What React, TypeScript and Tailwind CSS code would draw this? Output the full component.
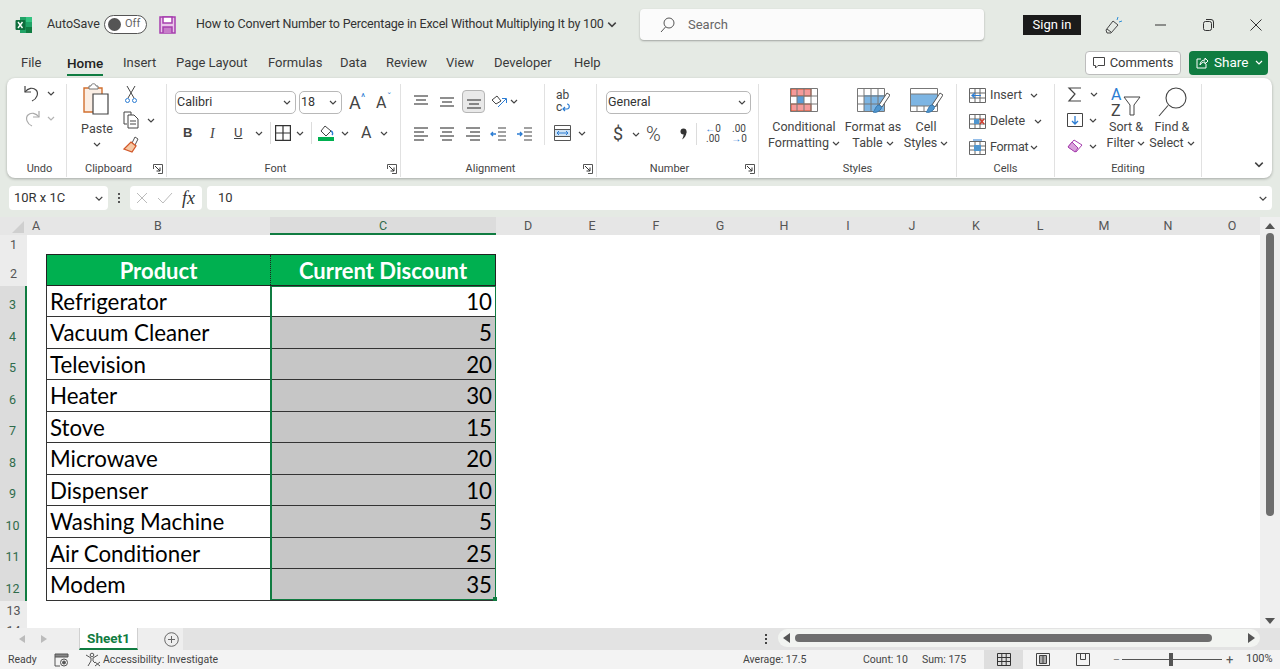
import React from "react";

const Chev = ({ c = "", s = "#444" }: { c?: string; s?: string }) => (
  <svg viewBox="0 0 8 5" className={`w-[8px] h-[5px] shrink-0 ${c}`} fill="none" stroke={s} strokeWidth="1.2"><path d="M1 1l3 3 3-3" /></svg>
);
const I = ({ w, h, children, c = "" }: { w: number; h: number; children: React.ReactNode; c?: string }) => (
  <svg width={w} height={h} viewBox={`0 0 ${w} ${h}`} fill="none" stroke="#444" strokeWidth="1" className={`shrink-0 ${c}`}>{children}</svg>
);
const Lines = ({ rows }: { rows: [number, number, number][] }) => (
  <I w={18} h={16}>{rows.map(([x1, x2, y], i) => <path key={i} d={`M${x1} ${y}H${x2}`} strokeWidth="1.2" />)}</I>
);
const Launcher = () => (
  <svg width="10" height="10" viewBox="0 0 10 10" fill="none" stroke="#555" className="absolute right-[3px] top-[3px]">
    <path d="M.5 5V.5H9.5V9.5H5" /><path d="M2 2l5 5M7 3.5V7H3.5" stroke="#333" />
  </svg>
);
const Group = ({ w, label, launcher, pad = "", children }: { w: string; label: string; launcher?: boolean; pad?: string; children: React.ReactNode }) => (
  <div className={`${w} h-full flex flex-col shrink-0`}>
    <div className="flex-1 min-h-0 border-r border-[#e1e1e1] mt-[6px] -mb-[3px] relative">{children}</div>
    <div className={`h-[16px] mb-[1px] relative text-[11px] leading-[16px] text-center text-[#444] border-r border-[#e1e1e1] ${launcher ? "pr-[16px]" : ""} ${pad}`}>
      {label}{launcher && <Launcher />}
    </div>
  </div>
);
const Select = ({ w, text }: { w: string; text: string }) => (
  <div className={`${w} h-[23px] shrink-0 bg-white border border-[#b8b8b8] rounded-[5px] flex items-center justify-between pl-[1px] pr-[4px] text-[12.5px] text-[#333]`}>
    <span>{text}</span><Chev />
  </div>
);
const GridIcon = ({ children }: { children: React.ReactNode }) => (
  <I w={30} h={26}>
    {children}
    <path d="M1.5 1.5h27v23h-27z M1.5 9h27M1.5 17h27M8 1.5v23M15 1.5v23M22 1.5v23" stroke="#777" />
  </I>
);
const BigBtn = ({ w, icon, l1, l2 }: { w: string; icon: React.ReactNode; l1: string; l2: string }) => (
  <div className={`${w} flex flex-col items-center text-[12.5px] leading-[16px] text-[#444] shrink-0`}>
    <div className="h-[36px] pt-[4px] flex items-start justify-center">{icon}</div>
    <div>{l1}</div>
    <div className="flex items-center gap-[3px] whitespace-nowrap">{l2}<Chev /></div>
  </div>
);
const Brush = () => (
  <g>
    <path d="M31 6l3 2-8 12-3-2z" fill="#fff" stroke="#555" />
    <path d="M22 18c3 0 4 2 3 4-2 3-6 4-8 3 2-1 2-5 5-7z" fill="#4f96cf" stroke="#3a78ad" />
  </g>
);

const Cols = ["D", "E", "F", "G", "H", "I", "J", "K", "L", "M", "N", "O"];
const rowsData: [string, string][] = [
  ["Refrigerator", "10"], ["Vacuum Cleaner", "5"], ["Television", "20"], ["Heater", "30"], ["Stove", "15"],
  ["Microwave", "20"], ["Dispenser", "10"], ["Washing Machine", "5"], ["Air Conditioner", "25"], ["Modem", "35"],
];
const rowH = ["h-[19px]", "h-[32px]", "h-[31px]", "h-[32px]", "h-[31px]", "h-[32px]", "h-[31px]", "h-[32px]", "h-[31px]", "h-[32px]", "h-[31px]", "h-[32px]", "h-[21px]", "h-[8px]"];
const calibri = "font-['Lato',sans-serif]";

export default function App() {
  return (
    <div className="w-[1280px] h-[669px] overflow-hidden bg-[#e5eae4] font-['Roboto',sans-serif] text-[#333] flex flex-col">
      {/* Title bar */}
      <div className="h-[48px] pt-[1px] flex items-center shrink-0">
        <svg width="18" height="18" viewBox="0 0 18 18" className="ml-[15px]" stroke="none">
          <path d="M5 1h12v16H5z" fill="#21a366" /><path d="M11 1h6v5h-6z" fill="#33c481" /><path d="M11 11h6v6h-6z" fill="#107c41" />
          <rect x="0.5" y="4" width="10" height="10" rx="1" fill="#0f6e3c" />
          <path d="M3 6l4.5 6M7.5 6L3 12" stroke="#fff" strokeWidth="1.4" />
        </svg>
        <span className="ml-[14px] w-[52px] text-[12.5px] text-[#333]">AutoSave</span>
        <div className="ml-[5px] w-[43px] h-[19px] rounded-full border border-[#555] bg-white flex items-center pl-[3px] gap-[4px]">
          <div className="w-[13px] h-[13px] rounded-full bg-[#555]" />
          <span className="text-[11px] text-[#666]">Off</span>
        </div>
        <svg width="17" height="18" viewBox="0 0 17 18" className="ml-[12px]" fill="none" stroke="#a63fae" strokeWidth="1.5">
          <path d="M1 1h15v16H1z" fill="#e9c6e9" /><path d="M4 1h9v6H4z" fill="#fff" /><path d="M4 17v-6h9v6" fill="#c77cc9" />
        </svg>
        <span className="ml-[20px] text-[12.5px] tracking-[-0.18px] text-[#333] whitespace-nowrap w-[412px]">How to Convert Number to Percentage in Excel Without Multiplying It by 100</span>
        <Chev c="scale-125" />
        <div className="ml-[24px] w-[344px] h-[31px] bg-[#fbfbfb] rounded-[4px] shadow-[0_1px_2px_rgba(0,0,0,0.3)] flex items-center pl-[20px]">
          <svg width="15" height="16" viewBox="0 0 15 16" fill="none" stroke="#555"><circle cx="9" cy="6" r="5" /><path d="M5.5 10L1 15" /></svg>
          <span className="ml-[13px] text-[13px] text-[#666]">Search</span>
        </div>
        <div className="ml-[39px] w-[58px] h-[20px] bg-[#1b1b1b] text-white text-[13px] leading-[20px] text-center">Sign in</div>
        <svg width="18" height="20" viewBox="0 0 18 20" className="ml-[23px]" fill="none" stroke="#444">
          <path d="M9 6l5 4-7 8H3l-1-3z" /><path d="M3 14l4 3" />
          <path d="M13 5l1-3M15 7l3-1" stroke="#2b8dd6" />
        </svg>
        <svg width="12" height="2" viewBox="0 0 12 2" className="ml-[33px]" stroke="#333"><path d="M0 1h11" /></svg>
        <svg width="11" height="12" viewBox="0 0 11 12" className="ml-[36px]" fill="none" stroke="#333"><rect x=".5" y="2.5" width="8" height="9" rx="2" /><path d="M3 .5h5a2.500 2.500 0 012.500 2.500v6" /></svg>
        <svg width="12" height="12" viewBox="0 0 12 12" className="ml-[36px]" stroke="#333"><path d="M.5.5l11 11M11.500.5l-11 11" /></svg>
      </div>

      {/* Tabs */}
      <div className="h-[30px] pl-[21px] flex items-center shrink-0 text-[13px] text-[#3a3a3a] relative">
        <span className="w-[46px]">File</span>
        <span className="w-[56px]"><span className="font-medium relative text-[#222] inline-block text-[13.5px]">Home<span className="absolute left-0 right-0 -bottom-[3px] h-[2px] bg-[#107c41]" /></span></span>
        <span className="w-[53px]">Insert</span>
        <span className="w-[92px]">Page Layout</span>
        <span className="w-[72px]">Formulas</span>
        <span className="w-[46px]">Data</span>
        <span className="w-[60px]">Review</span>
        <span className="w-[48px]">View</span>
        <span className="w-[80px]">Developer</span>
        <span>Help</span>
        <div className="ml-auto flex items-center gap-[8px] mr-[12px] -mt-[1px]">
          <div className="w-[96px] h-[24px] bg-white border border-[#bdbdbd] rounded-[4px] flex items-center justify-center gap-[5px] text-[13px]">
            <svg width="12" height="12" viewBox="0 0 12 12" fill="none" stroke="#444"><path d="M.5.5h11v8H5L2.500 11V8.500h-2z" /></svg>
            Comments
          </div>
          <div className="w-[79px] h-[24px] bg-[#107c41] text-white rounded-[4px] flex items-center pl-[7px] gap-[5px] text-[13.5px]">
            <svg width="13" height="13" viewBox="0 0 13 13" fill="none" stroke="#fff"><path d="M5 3H1v9h9V8" /><path d="M4 9c0-3 2-5 5-5V2l3 3-3 3V6c-2 0-4 1-5 3z" /></svg>
            Share
            <Chev c="ml-[2px]" s="#fff" />
          </div>
        </div>
      </div>

      {/* Ribbon */}
      <div className="mx-[7px] w-[1265px] h-[100px] bg-white rounded-[8px] shadow-[0_1px_3px_rgba(0,0,0,0.28)] flex shrink-0 text-[#444] relative">
        <Group w="w-[60px]" label="Undo" pad="pl-[6px]">
          <div className="pl-[16px] pt-[1px] flex flex-col gap-[9px]">
            <div className="flex items-center gap-[6px] h-[16px]">
              <svg width="18" height="17" viewBox="0 0 18 17" fill="none" stroke="#444" strokeWidth="1.2"><path d="M2 1v6h6" /><path d="M2 7c3-4 8-5 11-2s1 9-4 11" /></svg>
              <Chev />
            </div>
            <div className="flex items-center gap-[6px] h-[16px]">
              <svg width="18" height="17" viewBox="0 0 18 17" fill="none" stroke="#aaa" strokeWidth="1.2"><path d="M16 1v6h-6" /><path d="M16 7c-3-4-8-5-11-2s-1 9 4 11" /></svg>
              <Chev c="opacity-40" />
            </div>
          </div>
        </Group>
        <Group w="w-[100px]" label="Clipboard" launcher>
          <div className="flex pl-[15px] -mt-[1px]">
            <div className="w-[30px] flex flex-col items-center text-[12.5px] leading-[16px]">
              <svg width="30" height="32" viewBox="0 0 30 32" fill="none">
                <path d="M2 5h18v24H2z" fill="#fbeee4" stroke="#d2702f" strokeWidth="1.4" />
                <path d="M7 6V3h2c0-3 5-3 5 0h2v3z" fill="#fff" stroke="#777" />
                <path d="M11 11h15v20H11z" fill="#fff" stroke="#444" strokeWidth="1.2" />
              </svg>
              <div className="mt-[6px]">Paste</div>
              <Chev c="mt-[5px]" />
            </div>
            <div className="ml-[13px] flex flex-col pt-[2px] gap-[7px]">
              <svg width="12" height="19" viewBox="0 0 12 19" fill="none" stroke="#444"><path d="M2 1l7 12M10 1L3 13" /><circle cx="2.500" cy="15.500" r="2" stroke="#2b7cd3" /><circle cx="9.500" cy="15.500" r="2" stroke="#2b7cd3" /></svg>
              <div className="flex items-center gap-[8px] -ml-[2px]">
                <svg width="16" height="18" viewBox="0 0 16 18" fill="none" stroke="#444"><path d="M1 1h7v3M1 1v12h3" /><path d="M5 4h6l4 4v9H5z" fill="#fff" /><path d="M7 10h6M7 13h6" /></svg>
                <Chev />
              </div>
              <svg width="18" height="18" viewBox="0 0 18 18" fill="none" className="-ml-[3px] -mt-[1px]"><path d="M10 8l3-6 3 2-3 6" fill="#fff" stroke="#555" /><path d="M9 7l5 4-4 6-8-3z" fill="#f6c8a4" stroke="#d2582a" strokeWidth="1.3" /></svg>
            </div>
          </div>
        </Group>
        <Group w="w-[234px]" label="Font" launcher>
          <div className="pl-[8px] pt-[7px] flex items-center gap-[3px]">
            <Select w="w-[121px]" text="Calibri" />
            <Select w="w-[43px]" text="18" />
            <span className="ml-[4px] text-[18px] leading-none relative w-[16px]">A<span className="absolute -top-[1px] left-[12px] text-[10px] text-[#2b7cd3]">^</span></span>
            <span className="ml-[8px] text-[16px] leading-none relative w-[14px]">A<span className="absolute -top-[2px] left-[11px] text-[10px] text-[#2b7cd3]">ˇ</span></span>
          </div>
          <div className="mt-[8px] pl-[16px] flex items-center h-[22px] text-[14px]">
            <span className="font-bold w-[10px] text-[13px] font-['Liberation_Sans',sans-serif]">B</span>
            <span className="ml-[17px] italic w-[8px] font-['Liberation_Serif',serif]">I</span>
            <span className="ml-[16px] underline w-[10px] text-[13px]">U</span>
            <Chev c="ml-[11px]" />
            <div className="ml-[7px] w-px h-[22px] bg-[#dcdcdc]" />
            <svg width="16" height="16" viewBox="0 0 16 16" className="ml-[4px]" fill="none" stroke="#333" strokeWidth="1.2"><path d="M.6.6h14.800v14.800H.6zM8 .6v14.800M.6 8h14.800" /></svg>
            <Chev c="ml-[5px]" />
            <div className="ml-[7px] w-px h-[22px] bg-[#dcdcdc]" />
            <div className="ml-[6px] w-[16px] flex flex-col items-center">
              <svg width="15" height="12" viewBox="0 0 15 12" fill="none" stroke="#444"><path d="M6 1l6 5-5 5-5-5z" /><path d="M12 6c2 1 2 3 1 4" stroke="#2b7cd3" strokeWidth="1.4" /></svg>
              <div className="w-[16px] h-[4px] bg-[#00b050]" />
            </div>
            <Chev c="ml-[7px]" />
            <span className="ml-[12px] w-[12px] text-[16px]">A</span>
            <Chev c="ml-[7px]" />
          </div>
        </Group>
        <Group w="w-[196px]" label="Alignment" launcher>
          <div className="flex h-full">
            <div className="pl-[11px] w-[144px] border-r border-[#e1e1e1] mb-[19px]">
              <div className="flex items-center pt-[6px] gap-[8px] h-[29px]">
                <Lines rows={[[2, 16, 2], [4, 14, 6], [2, 16, 10]]} />
                <Lines rows={[[2, 16, 4], [4, 14, 8], [2, 16, 12]]} />
                <div className="w-[23px] h-[23px] -mx-[2px] bg-[#e9e9e9] border border-[#b5b5b5] rounded-[4px] flex items-center justify-center"><Lines rows={[[2, 16, 6], [4, 14, 10], [2, 16, 14]]} /></div>
                <svg width="18" height="14" viewBox="0 0 18 14" fill="none" stroke="#444" className="-ml-[1px]"><path d="M2 5l5-4 4 5-5 3z" /><path d="M8 12l8-8M12 3.500h4.500V8" stroke="#2b7cd3" /></svg>
                <Chev c="-ml-[6px]" />
              </div>
              <div className="flex items-center pt-[13px] gap-[8px]">
                <Lines rows={[[2, 16, 2], [2, 12, 6], [2, 16, 10], [2, 12, 14]]} />
                <Lines rows={[[2, 16, 2], [4, 14, 6], [2, 16, 10], [4, 14, 14]]} />
                <Lines rows={[[2, 16, 2], [6, 16, 6], [2, 16, 10], [6, 16, 14]]} />
                <I w={18} h={16}><path d="M8 2h8M8 6h8M8 10h8M8 14h8" strokeWidth="1.100" /><path d="M6 8H1M3 6L1 8l2 2" stroke="#2b7cd3" strokeWidth="1.300" /></I>
                <I w={18} h={16}><path d="M8 2h8M8 6h8M8 10h8M8 14h8" strokeWidth="1.100" /><path d="M1 8h5M4 6l2 2-2 2" stroke="#2b7cd3" strokeWidth="1.300" /></I>
              </div>
            </div>
            <div className="pl-[9px] flex flex-col">
              <div className="text-[12px] leading-[12px] pt-[5px] h-[41px] pl-[2px]">
                <div>ab</div>
                <div className="flex items-center">c
                  <svg width="8" height="9" viewBox="0 0 8 9" fill="none" stroke="#2b7cd3" strokeWidth="1.200"><path d="M5 1c3 0 3 5 0 5H1M3 4L1 6l2 2" /></svg>
                </div>
              </div>
              <div className="flex items-center gap-[7px]">
                <svg width="17" height="16" viewBox="0 0 17 16" fill="none" stroke="#555"><path d="M.5.5h16v15H.5zM.5 4.500h16M.5 11.500h16" /><rect x="1" y="5" width="15" height="6" fill="#cfe3f5" stroke="none" /><path d="M3 8h11M5 6l-2 2 2 2M12 6l2 2-2 2" stroke="#2b7cd3" /></svg>
                <Chev />
              </div>
            </div>
          </div>
        </Group>
        <Group w="w-[162px]" label="Number" launcher>
          <div className="pl-[9px] pt-[7px]"><Select w="w-[145px]" text="General" /></div>
          <div className="pl-[16px] mt-[9px] flex items-center h-[22px]">
            <span className="text-[18px] leading-none w-[10px]">$</span>
            <Chev c="ml-[9px]" />
            <span className="ml-[6px] text-[20px] font-light leading-none w-[20px]">%</span>
            <span className="ml-[13px] w-[8px] h-[22px] flex items-center justify-center">
              <svg width="7" height="12" viewBox="0 0 7 12"><circle cx="3.500" cy="3.500" r="3" fill="#333" /><path d="M6.500 3.500c0 4-2 6.500-4.500 8 1.200-2 1.500-3.500 1.500-5z" fill="#333" /></svg>
            </span>
            <div className="ml-[9px] w-px h-[22px] bg-[#dcdcdc]" />
            <div className="ml-[7px] w-[18px] text-[10px] leading-[10px] text-center"><div><span className="text-[#2b7cd3]">←</span>0</div><div>.00</div></div>
            <div className="ml-[8px] w-[18px] text-[10px] leading-[10px] text-center"><div>.00</div><div><span className="text-[#2b7cd3]">→</span>0</div></div>
          </div>
        </Group>
        <Group w="w-[198px]" label="Styles">
          <div className="flex pl-[7px] -mt-[1px]">
            <BigBtn w="w-[76px]" l1="Conditional" l2="Formatting" icon={
              <GridIcon><rect x="2" y="2" width="20" height="7" fill="#f59a9a" stroke="#d0522a" /><rect x="8" y="9" width="7" height="8" fill="#5a9bd5" stroke="none" /><rect x="2" y="17" width="20" height="7" fill="#f59a9a" stroke="#d0522a" /></GridIcon>
            } />
            <BigBtn w="w-[62px]" l1="Format as" l2="Table" icon={
              <I w={34} h={28}><rect x="8" y="8" width="20" height="16" fill="#7db5e3" stroke="none" /><path d="M1.500 1.500h27v23h-27zM1.500 9h27M1.500 17h27M8 1.500v23M15 1.500v23M22 1.500v23" stroke="#777" /><Brush /></I>
            } />
            <BigBtn w="w-[44px]" l1="Cell" l2="Styles" icon={
              <I w={34} h={28}><rect x="2" y="7" width="26" height="12" fill="#7db5e3" stroke="none" /><path d="M1.500 1.500h27v23h-27zM1.500 7h27M1.500 19h27M8 19v5M15 19v5M22 19v5" stroke="#777" /><Brush /></I>
            } />
          </div>
        </Group>
        <Group w="w-[98px]" label="Cells">
          <div className="pl-[12px] flex flex-col text-[12.5px] leading-[26px] -mt-[2px]">
            <div className="flex items-center h-[26px]">
              <I w={17} h={15}><path d="M.5.5h16v14H.5zM.5 5h16M.5 10h16M6 .5v14M11 .5v14" stroke="#666" /><path d="M3 7.500h9M6 5L3 7.500 6 10" stroke="#2b7cd3" strokeWidth="1.200" /></I>
              <span className="ml-[4px] w-[40px]">Insert</span><Chev />
            </div>
            <div className="flex items-center h-[26px]">
              <I w={17} h={15}><path d="M.5.500h16v14H.5zM.5 5h16M.5 10h16M6 .5v14M11 .5v14" stroke="#666" /><rect x="5" y="5" width="5" height="5" fill="#4f96cf" stroke="none" /><path d="M11 5l4 5M15 5l-4 5" stroke="#d0392a" strokeWidth="1.300" /></I>
              <span className="ml-[4px] w-[44px]">Delete</span><Chev />
            </div>
            <div className="flex items-center h-[26px]">
              <I w={17} h={16}><path d="M.5 2.500h16v13H.5zM.5 7h16M.5 11h16M6 2.500v13M11 2.500v13" stroke="#666" /><rect x="5" y="6" width="7" height="6" fill="#4f96cf" stroke="none" /><path d="M4 1h9" stroke="#2b7cd3" /></I>
              <span className="ml-[4px] w-[40px] tracking-[-0.3px]">Format</span><Chev />
            </div>
          </div>
        </Group>
        <Group w="w-[147px]" label="Editing">
          <div className="flex pl-[12px] -mt-[1px]">
            <div className="w-[36px] flex flex-col -mt-[2px]">
              <div className="flex items-center gap-[7px] h-[26px]">
                <I w={16} h={16}><path d="M14 2H2l6 6-6 7h12" strokeWidth="1.200" /></I><Chev />
              </div>
              <div className="flex items-center gap-[6px] h-[26px]">
                <I w={16} h={16}><path d="M.5 1.500h15v13H.5z" /><path d="M8 4v8M5 9l3 3 3-3" stroke="#2b7cd3" strokeWidth="1.300" /></I><Chev />
              </div>
              <div className="flex items-center gap-[6px] h-[26px]">
                <svg width="16" height="14" viewBox="0 0 16 14" fill="none" stroke="#a63fae"><path d="M1 8l6-7 8 5-6 7z" fill="#fff" /><path d="M1 8l4-5 6 6-3 4z" fill="#d9a0db" /></svg><Chev />
              </div>
            </div>
            <BigBtn w="w-[46px]" l1="Sort &" l2="Filter" icon={
              <svg width="34" height="30" viewBox="0 0 34 30" fill="none" stroke="#444">
                <text x="2" y="13" fontSize="16" fill="#2b7cd3" stroke="none" fontFamily="Roboto">A</text>
                <text x="2" y="29" fontSize="16" fill="#444" stroke="none" fontFamily="Roboto">Z</text>
                <path d="M15 10h16l-6 8v10h-4V18z" />
              </svg>
            } />
            <BigBtn w="w-[46px]" l1="Find &" l2="Select" icon={
              <svg width="34" height="30" viewBox="0 0 34 30" fill="none" stroke="#444"><circle cx="21" cy="11" r="10" strokeWidth="1.100" /><path d="M13 18.500L4 29" strokeWidth="1.100" /></svg>
            } />
          </div>
        </Group>
        <div className="flex-1 flex items-end justify-end pr-[9px] pb-[11px]"><Chev c="scale-125" /></div>
      </div>

      {/* Formula bar */}
      <div className="h-[24px] mt-[8px] ml-[9px] mr-[8px] flex items-center shrink-0 text-[13px] text-[#333]">
        <div className="w-[99px] h-full bg-white rounded-[4px] flex items-center justify-between pl-[5px] pr-[5px]"><span>10R x 1C</span><Chev c="scale-110" /></div>
        <div className="w-[22px] flex flex-col items-center gap-[2px]">{[0, 1, 2].map((n) => <div key={n} className="w-[2px] h-[2px] bg-[#555]" />)}</div>
        <div className="w-[72px] h-full bg-white rounded-[4px] flex items-center pl-[6px] gap-[9px]">
          <svg width="12" height="12" viewBox="0 0 12 12" stroke="#bbb"><path d="M1 1l10 10M11 1L1 11" /></svg>
          <svg width="16" height="12" viewBox="0 0 16 12" fill="none" stroke="#bbb"><path d="M1 6l5 5L15 1" /></svg>
          <span className="font-['Liberation_Serif',serif] italic text-[18px] text-[#333] leading-none">fx</span>
        </div>
        <div className="ml-[5px] flex-1 h-full bg-white rounded-[4px] flex items-center justify-between pl-[11px] pr-[5px]"><span>10</span><Chev c="scale-110" /></div>
      </div>

      {/* Sheet */}
      <div className="mt-[7px] h-[411px] flex shrink-0">
        <div className="w-[1260px] flex flex-col">
          <div className="h-[18px] flex bg-[#e6e6e6] text-[12.5px] leading-[18px] text-[#555] shrink-0 text-center overflow-hidden">
            <div className="w-[26px] shrink-0 relative"><div className="absolute right-[2px] bottom-[2px] w-0 h-0 border-l-[12px] border-l-transparent border-b-[12px] border-b-[#cfcfcf]" /></div>
            <div className="w-[20px] shrink-0">A</div>
            <div className="w-[224px] shrink-0">B</div>
            <div className="w-[226px] shrink-0 bg-[#dcdcdc] border-b-2 border-[#107c41] text-[#2f6b4b]">C</div>
            {Cols.map((c) => <div key={c} className="w-[64px] shrink-0">{c}</div>)}
          </div>
          <div className="relative flex-1 flex overflow-hidden bg-white">
            <div className="w-[27px] shrink-0 bg-[#ececec] text-[12.5px] text-[#555] text-center flex flex-col overflow-hidden">
              {rowH.map((h, i) => {
                const sel = i >= 2 && i <= 11;
                const pb = i === 0 ? "pb-[1px]" : i === 12 ? "pb-[3px]" : "pb-[4px]";
                return (
                  <div key={i} className={`${h} ${i === 13 ? "" : pb} shrink-0 flex items-end justify-center leading-[16px] overflow-hidden ${sel ? "bg-[#dcdcdc] border-r-2 border-[#107c41] text-[#2f6b4b]" : ""}`}>{i === 13 ? <span className="relative top-[9px]">14</span> : i + 1}</div>
                );
              })}
            </div>
            <div className="ml-[19px] mt-[19px] w-[450px] h-[345px] relative">
              <div className={`h-[32px] flex bg-[#00b050] text-white font-bold text-[22px] border border-[#222] leading-[32px] text-center ${calibri}`}>
                <div className="w-[224px] border-r border-dotted border-[#222]">Product</div>
                <div className="flex-1">Current Discount</div>
              </div>
              {rowsData.map(([p, d], i) => (
                <div key={p} className={`${i % 2 === 0 ? "h-[31px]" : "h-[32px]"} flex border-x border-b border-[#333] text-[22.3px] text-black leading-[32px] ${calibri}`}>
                  <div className="w-[224px] pl-[3px] border-r border-[#333]">{p}</div>
                  <div className={`flex-1 text-right pr-[3px] ${i === 0 ? "bg-white" : "bg-[#c6c6c6]"}`}>{d}</div>
                </div>
              ))}
              <div className="absolute left-[224px] top-[32px] w-[226px] h-[314px] border border-l-2 border-[#107c41]" />
              <div className="absolute left-[447px] top-[343px] w-[4px] h-[4px] bg-[#107c41]" />
            </div>
          </div>
        </div>
        <div className="w-[20px] bg-[#efefef] flex flex-col items-center">
          <svg width="10" height="6" viewBox="0 0 10 6" className="mt-[6px]"><path d="M0 6l5-6 5 6z" fill="#555" /></svg>
          <div className="mt-[4px] w-[8px] h-[283px] rounded-full bg-[#6e6e6e]" />
          <svg width="10" height="6" viewBox="0 0 10 6" className="mt-auto mb-[4px]"><path d="M0 0l5 6 5-6z" fill="#555" /></svg>
        </div>
      </div>

      {/* Sheet tabs + horizontal scroll */}
      <div className="h-[22px] flex bg-[#e3e3e3] shrink-0 items-stretch">
        <div className="w-[183px] bg-[#eeeeee] flex items-center pl-[19px]">
          <svg width="6" height="8" viewBox="0 0 6 8"><path d="M6 0L0 4l6 4z" fill="#bbb" /></svg>
          <svg width="6" height="8" viewBox="0 0 6 8" className="ml-[16px]"><path d="M0 0l6 4-6 4z" fill="#bbb" /></svg>
          <div className="ml-[32px] w-[59px] h-full bg-white border-x border-[#d0d0d0] border-b-2 border-b-[#107c41] text-[13.5px] font-bold text-[#107c41] text-center leading-[20px]">Sheet1</div>
          <svg width="15" height="15" viewBox="0 0 15 15" fill="none" stroke="#666" className="ml-[26px]"><circle cx="7.500" cy="7.500" r="6.800" /><path d="M7.500 4v7M4 7.500h7" /></svg>
        </div>
        <div className="w-[584px] flex items-center justify-end">
          <div className="flex flex-col gap-[2px]">{[0, 1, 2].map((n) => <div key={n} className="w-[2px] h-[2px] bg-[#444]" />)}</div>
        </div>
        <div className="ml-[11px] w-[482px] h-[18px] mt-[1px] bg-[#f2f4f1] rounded-full flex items-center pl-[5px]">
          <svg width="7" height="10" viewBox="0 0 7 10"><path d="M7 0L0 5l7 5z" fill="#555" /></svg>
          <div className="ml-[5px] w-[417px] h-[8px] rounded-full bg-[#6e6e6e]" />
          <svg width="7" height="10" viewBox="0 0 7 10" className="ml-[36px]"><path d="M0 0l7 5-7 5z" fill="#555" /></svg>
        </div>
      </div>

      {/* Status bar */}
      <div className="h-[19px] bg-[#f3f3f3] flex items-center text-[10.5px] text-[#444] shrink-0 whitespace-nowrap">
        <span className="ml-[8px] w-[36px]">Ready</span>
        <svg width="15" height="14" viewBox="0 0 15 14" fill="none" stroke="#555" className="ml-[10px]"><path d="M1 1h13v3H1z" fill="#888" /><path d="M1 4v9h5" /><circle cx="10" cy="9.500" r="3.500" /><circle cx="10" cy="9.500" r="1.500" fill="#555" /></svg>
        <svg width="16" height="15" viewBox="0 0 16 15" fill="none" stroke="#555" className="ml-[16px]"><circle cx="7" cy="3" r="1.800" /><path d="M1 3l5 3v3l-3 5M13 3L8 6v3l2 2" /><path d="M10 10l5 4M15 10l-5 4" /></svg>
        <span className="ml-[2px] w-[111px]">Accessibility: Investigate</span>
        <span className="ml-[529px] w-[63px]">Average: 17.5</span>
        <span className="ml-[57px] w-[45px]">Count: 10</span>
        <span className="ml-[14px] w-[44px]">Sum: 175</span>
        <div className="ml-[18px] w-[39px] h-full bg-[#dedede] flex items-center justify-center">
          <svg width="14" height="13" viewBox="0 0 14 13" fill="none" stroke="#333"><path d="M.5.5h13v12H.5zM.5 4.500h13M.5 8.500h13M4.800.5v12M9.200.5v12" /></svg>
        </div>
        <svg width="14" height="13" viewBox="0 0 14 13" fill="none" stroke="#444" className="ml-[13px]"><path d="M.5.5h13v12H.5z" /><path d="M3.500 2.500h7v8h-7zM7 2.500v8" fill="#aaa" /></svg>
        <svg width="14" height="13" viewBox="0 0 14 13" fill="none" stroke="#444" className="ml-[26px]"><path d="M.5.5h13v12H.5zM4.500.5v6h5v-6" /></svg>
        <span className="ml-[23px] w-[9px] text-[#777]">–</span>
        <div className="w-[100px] h-[13px] flex items-center relative">
          <div className="w-full h-px bg-[#555]" />
          <div className="absolute left-[47px] top-0 w-[4px] h-[13px] bg-[#555]" />
        </div>
        <span className="ml-[4px] w-[15px] text-[13px] text-[#555]">+</span>
        <span className="ml-[5px] text-[11px]">100%</span>
      </div>
    </div>
  );
}
